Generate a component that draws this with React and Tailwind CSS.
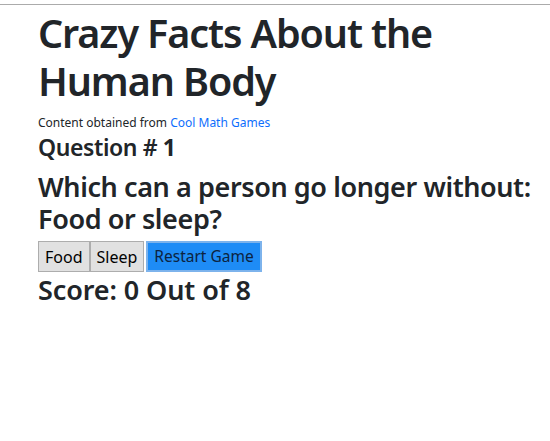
import React, { useState } from "react";

const questions = [
  { q: "Which can a person go longer without: Food or sleep?", a: ["Food", "Sleep"] },
];

export default function App() {
  const [score] = useState(0);
  const current = questions[0];

  return (
    <div className="min-h-[441px] bg-white font-['Noto_Sans',sans-serif] text-[#212529]">
      <div className="h-1 bg-white" />
      <div className="h-px bg-[#ababab]" />
      <div className="pl-[38px] pr-2">
        <h1 className="mt-[4px] text-[39.5px] leading-[48px] font-semibold tracking-[-1.1px]">
          Crazy Facts About the Human Body
        </h1>
        <p className="mt-[9px] text-[12px] leading-[18px]">
          Content obtained from{" "}
          <a href="#" className="text-[#0d6efd]">
            Cool Math Games
          </a>
        </p>
        <h4 className="mt-[1px] text-[23px] leading-[28px] font-semibold tracking-[-0.4px]">
          Question # <b className="font-bold">1</b>
        </h4>
        <h3 className="mt-[10px] text-[27px] leading-[32px] font-semibold tracking-[-0.4px]">
          {current.q}
        </h3>
        <div className="mt-[6px] flex items-center">
          {current.a.map((label) => (
            <button
              key={label}
              className="h-[31px] px-[6px] border border-[#adadad] bg-[#e1e1e1] text-[16px] leading-none text-black"
            >
              {label}
            </button>
          ))}
          <button className="ml-[2px] h-[31px] px-[6px] border-2 border-[#7db3ec] bg-[#1e8cf6] text-[15.5px] leading-none text-[#0c2340]">
            Restart Game
          </button>
        </div>
        <h3 className="mt-[2px] text-[27px] leading-[32px] font-semibold tracking-[-0.1px]">
          Score: {score} Out of 8
        </h3>
      </div>
    </div>
  );
}
